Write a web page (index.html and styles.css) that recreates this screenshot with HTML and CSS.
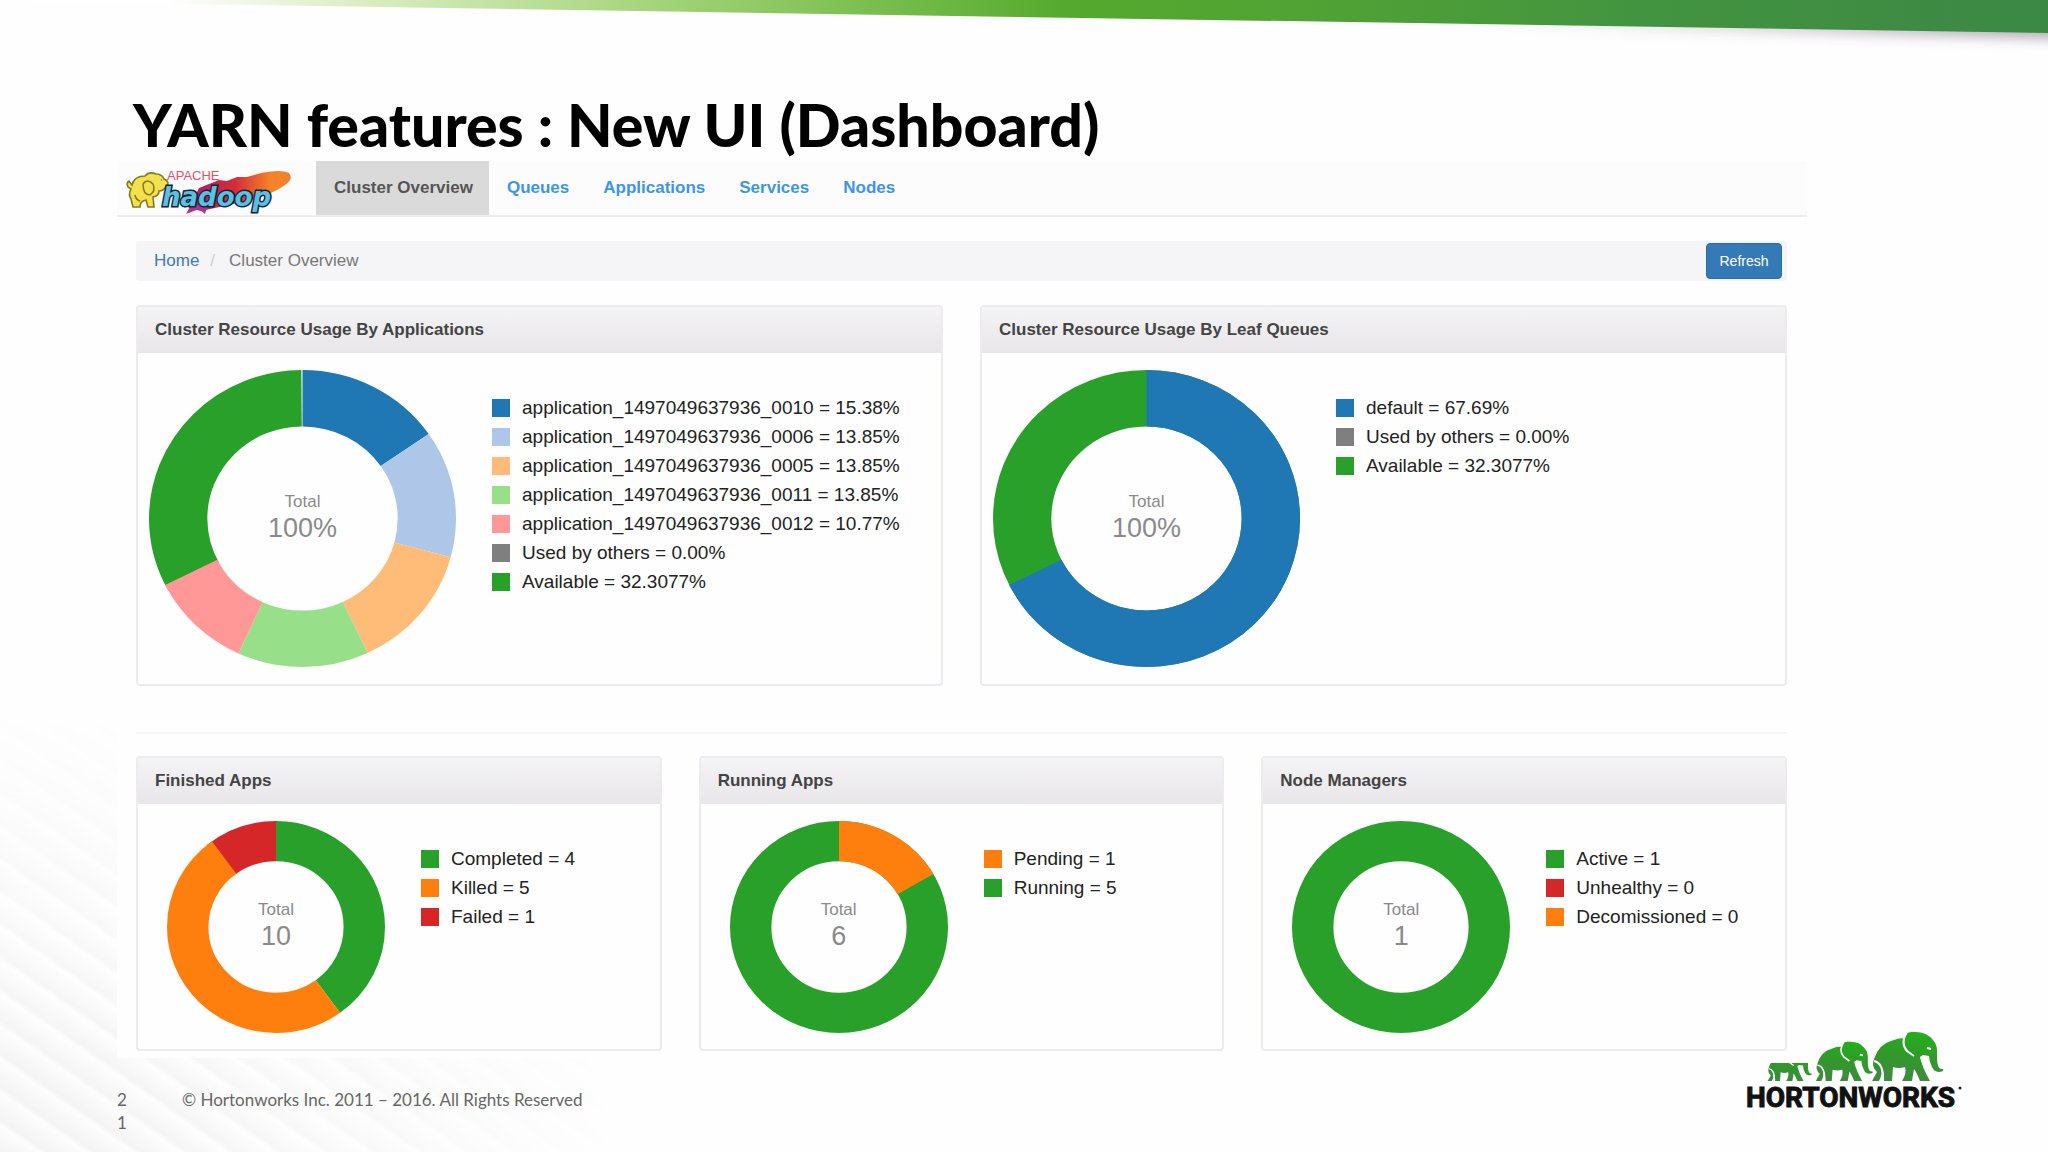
FILE: index.html
```html
<!DOCTYPE html>
<html lang="en">
<head>
<meta charset="utf-8">
<title>YARN features : New UI (Dashboard)</title>
<link rel="stylesheet" href="styles.css">
</head>
<body>
<div class="slide">
  <svg class="ribbon" viewBox="0 0 2048 60" preserveAspectRatio="none" aria-hidden="true">
    <defs>
      <linearGradient id="ribbon-fill" x1="0" x2="1" y1="0" y2="0">
        <stop offset="0.08" stop-color="#ffffff"/>
        <stop offset="0.16" stop-color="#e0f0cc"/>
        <stop offset="0.3" stop-color="#acd884"/>
        <stop offset="0.42" stop-color="#7cc050"/>
        <stop offset="0.52" stop-color="#55a92e"/>
        <stop offset="0.62" stop-color="#52a433"/>
        <stop offset="0.8" stop-color="#439440"/>
        <stop offset="1" stop-color="#3b8845"/>
      </linearGradient>
      <linearGradient id="shade-fill" x1="0" x2="1" y1="0" y2="0">
        <stop offset="0.5" stop-color="#605060" stop-opacity="0"/>
        <stop offset="1" stop-color="#605060" stop-opacity="0.5"/>
      </linearGradient>
      <filter id="soft" x="-5%" y="-50%" width="110%" height="250%"><feGaussianBlur stdDeviation="6"/></filter>
    </defs>
    <path d="M900 0H2100V40L900 16Z" fill="url(#shade-fill)" filter="url(#soft)"/>
    <path d="M0 0H2048V33L0 1Z" fill="url(#ribbon-fill)"/>
  </svg>
  <div class="stripes" aria-hidden="true"></div>

  <h1 class="slide-title">YARN features : New UI (Dashboard)</h1>

  <main class="app">
    <header class="navbar">
      <a class="brand" href="#" aria-label="Apache Hadoop">
        <svg class="brand-logo" viewBox="0 0 176 46" aria-hidden="true">
          <defs>
            <linearGradient id="comet" x1="0" x2="1"><stop offset="0" stop-color="#b01c6c"/><stop offset="0.45" stop-color="#d42c38"/><stop offset="0.8" stop-color="#f48428"/><stop offset="1" stop-color="#f08030"/></linearGradient>
          </defs>
          <path d="M76 20L96 12L104 13L114 9L124 9L138 5Q158 1 166 5Q171 11 162 17Q150 26 124 33L78 43L66 40Z" fill="url(#comet)"/>
          <path d="M68 37L63 46L76 41L82 46L84 38Z" fill="#b03090"/>
          <path d="M5 19Q3 15 6 13L9 17Q11 8 22 8Q26 3 33 6Q39 6 41 11Q48 14 43 19Q40 23 36 23Q36 28 30 29L31 39H25L23 32Q17 33 17 39H10L8 31Q5 27 8 21Z" fill="#f4e04c" stroke="#827a20" stroke-width="1.6"/>
          <path d="M20 16Q20 27 27 27Q33 23 30 16Q24 10 20 16M12 27Q13 32 17 33M38 12h1" fill="none" stroke="#827a20" stroke-width="1.5"/>
          <text class="brand-apache" x="44" y="12">APACHE</text>
          <text class="brand-hadoop" x="39" y="38">hadoop</text>
        </svg>
      </a>
      <nav class="tabs" aria-label="Main">
        <a class="tab tab-active" href="#" aria-current="page">Cluster Overview</a>
        <a class="tab" href="#">Queues</a>
        <a class="tab" href="#">Applications</a>
        <a class="tab" href="#">Services</a>
        <a class="tab" href="#">Nodes</a>
      </nav>
    </header>

    <div class="content">
      <div class="crumb-bar">
        <nav class="crumbs" aria-label="Breadcrumb">
          <a class="crumb-link" href="#">Home</a>
          <span class="crumb-sep">/</span>
          <span class="crumb-here">Cluster Overview</span>
        </nav>
        <button class="refresh" type="button">Refresh</button>
      </div>

      <div class="row row-two">
        <section class="panel panel-large">
          <h2 class="panel-title">Cluster Resource Usage By Applications</h2>
          <div class="panel-body">
            <div class="donut">
              <svg class="ring" viewBox="-100 -100 200 200" preserveAspectRatio="none" aria-hidden="true">
                <g class="arcs">
                  <circle r="81" pathLength="100" stroke="#28a02a" stroke-dasharray="33 100" stroke-dashoffset="-67"/>
                  <circle r="81" pathLength="100" stroke="#1f77b4" stroke-dasharray="15.38 100"/>
                  <circle r="81" pathLength="100" stroke="#aec7e8" stroke-dasharray="13.85 100" stroke-dashoffset="-15.38"/>
                  <circle r="81" pathLength="100" stroke="#ffbb78" stroke-dasharray="13.85 100" stroke-dashoffset="-29.23"/>
                  <circle r="81" pathLength="100" stroke="#98df8a" stroke-dasharray="13.85 100" stroke-dashoffset="-43.08"/>
                  <circle r="81" pathLength="100" stroke="#ff9896" stroke-dasharray="10.77 100" stroke-dashoffset="-56.93"/>
                </g>
              </svg>
              <p class="total">Total<strong class="total-value">100%</strong></p>
            </div>
            <ul class="legend">
              <li class="key"><span class="swatch blue"></span>application_1497049637936_0010 = 15.38%</li>
              <li class="key"><span class="swatch pale-blue"></span>application_1497049637936_0006 = 13.85%</li>
              <li class="key"><span class="swatch peach"></span>application_1497049637936_0005 = 13.85%</li>
              <li class="key"><span class="swatch pale-green"></span>application_1497049637936_0011 = 13.85%</li>
              <li class="key"><span class="swatch pink"></span>application_1497049637936_0012 = 10.77%</li>
              <li class="key"><span class="swatch grey"></span>Used by others = 0.00%</li>
              <li class="key"><span class="swatch green"></span>Available = 32.3077%</li>
            </ul>
          </div>
        </section>

        <section class="panel panel-large">
          <h2 class="panel-title">Cluster Resource Usage By Leaf Queues</h2>
          <div class="panel-body">
            <div class="donut">
              <svg class="ring" viewBox="-100 -100 200 200" preserveAspectRatio="none" aria-hidden="true">
                <g class="arcs">
                  <circle r="81" stroke="#28a02a"/>
                  <circle r="81" pathLength="100" stroke="#1f77b4" stroke-dasharray="67.69 100"/>
                </g>
              </svg>
              <p class="total">Total<strong class="total-value">100%</strong></p>
            </div>
            <ul class="legend">
              <li class="key"><span class="swatch blue"></span>default = 67.69%</li>
              <li class="key"><span class="swatch grey"></span>Used by others = 0.00%</li>
              <li class="key"><span class="swatch green"></span>Available = 32.3077%</li>
            </ul>
          </div>
        </section>
      </div>

      <hr class="divider">

      <div class="row row-three">
        <section class="panel panel-small">
          <h2 class="panel-title">Finished Apps</h2>
          <div class="panel-body">
            <div class="donut">
              <svg class="ring" viewBox="-100 -100 200 200" preserveAspectRatio="none" aria-hidden="true">
                <g class="arcs">
                  <circle r="81" pathLength="100" stroke="#d62728" stroke-dasharray="11 100" stroke-dashoffset="-89"/>
                  <circle r="81" pathLength="100" stroke="#28a02a" stroke-dasharray="40 100"/>
                  <circle r="81" pathLength="100" stroke="#ff7f0e" stroke-dasharray="50 100" stroke-dashoffset="-40"/>
                </g>
              </svg>
              <p class="total">Total<strong class="total-value">10</strong></p>
            </div>
            <ul class="legend">
              <li class="key"><span class="swatch green"></span>Completed = 4</li>
              <li class="key"><span class="swatch orange"></span>Killed = 5</li>
              <li class="key"><span class="swatch red"></span>Failed = 1</li>
            </ul>
          </div>
        </section>

        <section class="panel panel-small">
          <h2 class="panel-title">Running Apps</h2>
          <div class="panel-body">
            <div class="donut">
              <svg class="ring" viewBox="-100 -100 200 200" preserveAspectRatio="none" aria-hidden="true">
                <g class="arcs">
                  <circle r="81" stroke="#28a02a"/>
                  <circle r="81" pathLength="6" stroke="#ff7f0e" stroke-dasharray="1 6"/>
                </g>
              </svg>
              <p class="total">Total<strong class="total-value">6</strong></p>
            </div>
            <ul class="legend">
              <li class="key"><span class="swatch orange"></span>Pending = 1</li>
              <li class="key"><span class="swatch green"></span>Running = 5</li>
            </ul>
          </div>
        </section>

        <section class="panel panel-small">
          <h2 class="panel-title">Node Managers</h2>
          <div class="panel-body">
            <div class="donut">
              <svg class="ring" viewBox="-100 -100 200 200" preserveAspectRatio="none" aria-hidden="true">
                <g class="arcs">
                  <circle r="81" stroke="#28a02a"/>
                </g>
              </svg>
              <p class="total">Total<strong class="total-value">1</strong></p>
            </div>
            <ul class="legend">
              <li class="key"><span class="swatch green"></span>Active = 1</li>
              <li class="key"><span class="swatch red"></span>Unhealthy = 0</li>
              <li class="key"><span class="swatch orange"></span>Decomissioned = 0</li>
            </ul>
          </div>
        </section>
      </div>
    </div>
  </main>

  <footer class="slide-footer">
    <span class="page-number">21</span>
    <span class="copyright">© Hortonworks Inc. 2011 – 2016. All Rights Reserved</span>
  </footer>

  <svg class="sponsor" viewBox="0 0 222 84" role="img" aria-label="Hortonworks">
    <defs>
      <linearGradient id="hide" x1="0.6" x2="0.4" y1="0" y2="1"><stop offset="0" stop-color="#22b01a"/><stop offset="0.5" stop-color="#32982c"/><stop offset="1" stop-color="#3f8a40"/></linearGradient>
      <g id="elephant">
        <path fill="url(#hide)" d="M1 50L6 41Q0 36 3 28Q8 13 20 10Q27 7 33 7Q35 0 42 1Q55 0 62 9Q67 14 66 26Q66 37 70 38Q73 37 72 40Q64 43 61 36Q58 30 58 25L52 24L49 26Q51 36 59 50H49Q46 42 43 38L41 50H31Q36 42 34 36Q28 38 22 36L21 50H13Q13 41 10 35Q12 43 8 50Z"/>
        <path fill="none" stroke="#fff" stroke-width="2" d="M36 1Q29 12 36 20L43 25M3 30Q13 32 12 51M60 18L56 17"/>
      </g>
      <clipPath id="calf-clip"><rect x="20" y="33" width="50" height="30"/></clipPath>
    </defs>
    <use href="#elephant" transform="translate(127 1)"/>
    <use href="#elephant" transform="translate(71 11) scale(0.8)"/>
    <g clip-path="url(#calf-clip)"><use href="#elephant" transform="translate(23 20) scale(0.62)"/></g>
    <text class="sponsor-name" x="2" y="77">HORTONWORKS</text>
    <circle cx="216" cy="58" r="1.5" fill="#222"/>
  </svg>
</div>
</body>
</html>
```
FILE: styles.css
```css
* { box-sizing: border-box; }

body {
  margin: 0;
  background: #fefefe;
  color: #333;
  font-family: "Liberation Sans", Arial, sans-serif;
}

.slide {
  position: relative;
  min-height: 100vh;
  padding: 88px 241px 0 117px;
  overflow: hidden;
}

.ribbon {
  position: absolute;
  top: 0;
  left: 0;
  width: 100%;
  height: 60px;
}

.stripes {
  position: absolute;
  left: 0;
  bottom: 0;
  width: 700px;
  height: 500px;
  background: repeating-linear-gradient(35deg, #f4f4f4 0, #f9f9f9 14px, #fdfdfd 22px, #f4f4f4 27px);
  -webkit-mask-image: radial-gradient(farthest-side at bottom left, #000 15%, transparent 90%);
  mask-image: radial-gradient(farthest-side at bottom left, #000 15%, transparent 90%);
}

.slide-title {
  position: relative;
  margin: 0;
  padding: 0 16px;
  color: #000;
  font: 900 59px/73px Lato, sans-serif;
}

.app {
  position: relative;
  background: #fefefe;
  padding-bottom: 7px;
}

.navbar {
  display: flex;
  height: 56px;
  background: #fcfcfc;
  border-bottom: 2px solid #ededed;
}

.brand { width: 199px; padding: 7px 6px; }
.brand-logo { display: block; width: 176px; height: 46px; }
.brand-apache { font: 13px "Liberation Sans", Arial, sans-serif; fill: #e0506c; }
.brand-hadoop {
  font: italic bold 26px "DejaVu Sans", sans-serif;
  fill: #5cc0e0;
  stroke: #10243c;
  stroke-width: 3px;
  paint-order: stroke;
}

.tabs { display: flex; }
.tab {
  padding: 0 16px 0 18px;
  color: #3d95ea;
  font-size: 17px;
  font-weight: bold;
  line-height: 53px;
  text-decoration: none;
}
.tab-active { background: #dadada; color: #555; }

.content { padding: 24px 20px 0 19px; }

.crumb-bar {
  display: flex;
  justify-content: space-between;
  align-items: flex-start;
  height: 40px;
  margin-bottom: 24px;
  padding: 2px 5px 2px 18px;
  background: #f5f4f6;
  border-radius: 4px;
}
.crumbs { display: flex; font-size: 17px; line-height: 36px; }
.crumb-link { color: #4079b4; text-decoration: none; }
.crumb-sep { padding: 0 14px 0 11px; color: #ccc; }
.crumb-here { color: #777; }

.refresh {
  width: 76px;
  height: 36px;
  padding: 0;
  border: 1px solid #2e6da4;
  border-radius: 4px;
  background: #337ab7;
  color: #fff;
  font: 14px "Liberation Sans", Arial, sans-serif;
}

.row { display: grid; gap: 37px; }
.row-two { grid-template-columns: 1fr 1fr; }
.row-three { grid-template-columns: 1fr 1fr 1fr; }

.panel {
  border: 2px solid #edebef;
  border-radius: 4px;
  background: #fefefe;
}
.panel-title {
  margin: 0;
  padding: 0 17px;
  background: linear-gradient(#f4f3f5, #e8e6e9);
  color: #444;
  font-size: 17px;
  line-height: 46px;
}
.panel-body { display: flex; align-items: flex-start; }
.panel-large .panel-body { padding: 17px 11px; }
.panel-small .panel-body { padding: 17px 29px 16px; }

.donut { display: grid; flex: none; place-items: center; }
.ring, .total { grid-area: 1 / 1; }
.panel-large .ring { width: 307px; height: 297px; }
.panel-small .ring { width: 218px; height: 212px; }
.arcs { fill: none; stroke-width: 38px; transform: rotate(-90deg); }

.total {
  margin: 0;
  padding-bottom: 2px;
  color: #8a8a8a;
  font-size: 17px;
  line-height: 20px;
  text-align: center;
}
.total-value { display: block; font-size: 27px; font-weight: normal; line-height: 32px; }

.legend {
  margin: 0;
  padding: 23px 0 0 36px;
  list-style: none;
  color: #222;
  font-size: 19px;
  line-height: 29px;
}
.key { display: flex; align-items: center; gap: 12px; }
.swatch { width: 18px; height: 18px; }
.blue { background: #1f77b4; }
.pale-blue { background: #aec7e8; }
.peach { background: #ffbb78; }
.pale-green { background: #98df8a; }
.pink { background: #ff9896; }
.grey { background: #7f7f7f; }
.green { background: #28a02a; }
.orange { background: #ff7f0e; }
.red { background: #d62728; }

.divider { margin: 46px 0 22px; border: 0; border-top: 2px solid #f6f4f6; }

.slide-footer {
  position: relative;
  display: flex;
  gap: 55px;
  padding-top: 30px;
  color: #666;
  font: 17px/23px Lato, sans-serif;
}
.page-number { width: 10px; word-break: break-all; }

.sponsor {
  position: absolute;
  right: 82px;
  bottom: 38px;
  width: 222px;
  height: 84px;
}
.sponsor-name { font: bold 28px Roboto, sans-serif; fill: #111; stroke: #111; stroke-width: 1px; }
```
